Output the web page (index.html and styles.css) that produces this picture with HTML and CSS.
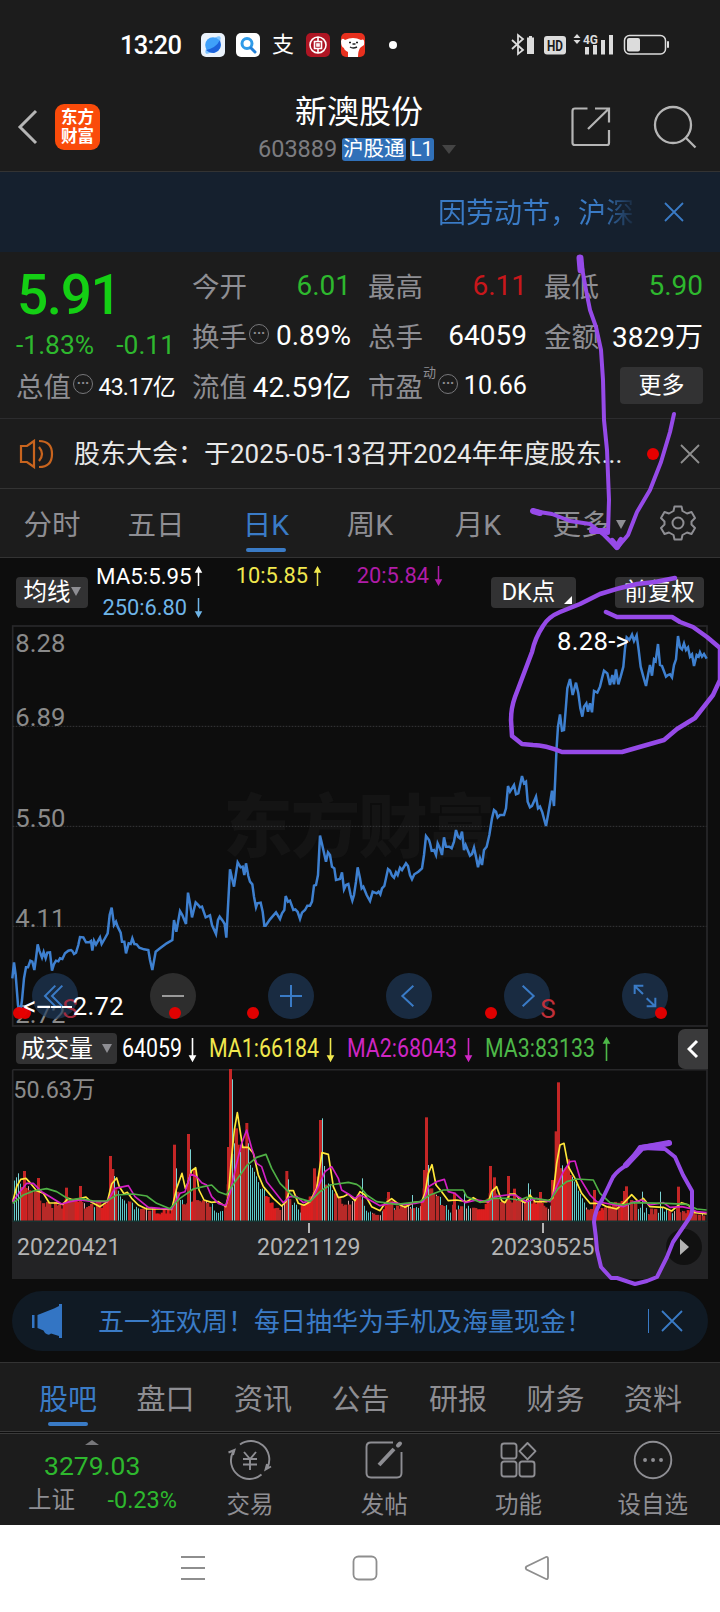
FILE: index.html
```html
<!DOCTYPE html>
<html lang="zh-CN">

<head>
    <meta charset="UTF-8">
    <meta name="viewport" content="width=device-width, initial-scale=1.0">
    <title>新澳股份 603889</title>
    <link rel="stylesheet" href="styles.css">
</head>

<body>
    <div class="status-bar">
        <span class="time">13:20</span>
        <div class="status-apps">
            <svg width="24" height="24" viewBox="0 0 24 24"><rect width="24" height="24" rx="5" fill="#eaf2fb" /><ellipse cx="12" cy="12" rx="11" ry="4" transform="rotate(-50 12 12)" fill="#7fc4ff" /><circle cx="12" cy="12" r="7.8" fill="#3fa0fa" /><path d="M5 17Q15 15 19 7Q22 17 13 20Q8 20 5 17z" fill="#1c62dc" /></svg>
            <svg width="24" height="24" viewBox="0 0 24 24"><rect width="24" height="24" rx="5" fill="#fff" /><circle cx="11" cy="10.5" r="5" fill="none" stroke="#2f9be8" stroke-width="3" /><path d="M15 15l4 4" stroke="#2280d8" stroke-width="3" stroke-linecap="round" /></svg>
            <span class="pay">支</span>
            <svg width="24" height="24" viewBox="0 0 24 24"><rect width="24" height="24" rx="5" fill="#ae1523" /><circle cx="12" cy="12" r="8" fill="none" stroke="#fff" stroke-width="1.6" /><path d="M12 4v4M12 16v4M8.500 8.500h7v7h-7zM11 11h2v2h-2z" fill="none" stroke="#fff" stroke-width="1.600" /></svg>
            <svg width="24" height="24" viewBox="0 0 24 24"><rect width="24" height="24" rx="5" fill="#e8301e" /><path d="M0 8Q1 4 4 7Q12 3 20 7Q24 5 23 12Q20 14 19 15Q17 18 17 24H7V19Q3 17 3 15Q0 14 0 8z" fill="#fff" /><path d="M8 9.500h2M15 9.500h2M11.500 11h3M9 14q3 2 7 0" stroke="#222" stroke-width="1.400" fill="none" /></svg>
            <i class="dot"></i>
        </div>
        <svg class="status-icons" width="160" height="24" viewBox="0 0 160 24" fill="#dcdcdc">
            <path d="M1 7l11 10-5 4V2l5 4L1 16" fill="none" stroke="#dcdcdc" stroke-width="1.800" />
            <path d="M18 3h3v1.500h2V21h-7V4.500h2z" />
            <rect x="33" y="3" width="22" height="18.500" rx="3" />
            <text x="36" y="17.500" class="hd" textLength="16" lengthAdjust="spacingAndGlyphs">HD</text>
            <path d="M62.500 5l3.500-4 3.500 4zM62.500 7l3.500 4 3.500-4z" />
            <text x="72" y="11" class="g4" textLength="15" lengthAdjust="spacingAndGlyphs">4G</text>
            <path d="M74 14h4v7.500h-4zM82 12h4v9.500h-4zM90 7h4v14.500h-4zM98 2h4v19.500h-4z" />
            <rect x="113.500" y="2.500" width="41" height="18.500" rx="5" fill="none" stroke="#dcdcdc" stroke-width="1.500" />
            <rect x="116" y="5" width="13" height="13.500" rx="2" />
            <rect x="156" y="8" width="2" height="7" rx="1" />
        </svg>
    </div>

    <div class="header">
        <svg class="back" width="24" height="40" viewBox="0 0 24 40"><path d="M20 4L4 20l16 16" fill="none" stroke="#b5b5b5" stroke-width="3" /></svg>
        <div class="logo">东方<br>财富</div>
        <div class="title">
            <h1>新澳股份</h1>
            <div class="code"><span>603889</span><b>沪股通</b><b>L1</b><i class="down"></i></div>
        </div>
        <svg class="share" width="40" height="40" viewBox="0 0 40 40" fill="none" stroke="#b5b5b5" stroke-width="2.200"><path d="M16.500 1.500H4Q1.500 1.500 1.500 4V36Q1.500 38 4 38H36Q38 38 38 36V23M24 1.500H38V15.500M37.500 2L17 22" /></svg>
        <svg class="search" width="44" height="44" viewBox="0 0 44 44" fill="none" stroke="#b5b5b5" stroke-width="2.300"><circle cx="20" cy="20" r="18" /><path d="M32.500 32.500l10 10" /></svg>
    </div>

    <div class="notice">
        <span class="notice-text">因劳动节，沪深</span>
        <svg width="20" height="20" viewBox="0 0 20 20"><path d="M1 1l18 18M19 1L1 19" stroke="#3a7bc6" stroke-width="1.800" /></svg>
    </div>

    <div class="quote">
        <div class="price-col">
            <div class="price">5.91</div>
            <div class="change"><span>-1.83%</span><span>-0.11</span></div>
            <div class="cell"><label>总值</label><i class="more-dot">···</i><span class="val small">43.17亿</span></div>
        </div>
        <div class="quote-grid">
            <div class="cell"><label>今开</label><span class="val green">6.01</span></div>
            <div class="cell"><label>最高</label><span class="val red">6.11</span></div>
            <div class="cell"><label>最低</label><span class="val green">5.90</span></div>
            <div class="cell"><label>换手</label><i class="more-dot">···</i><span class="val">0.89%</span></div>
            <div class="cell"><label>总手</label><span class="val">64059</span></div>
            <div class="cell"><label>金额</label><span class="val">3829万</span></div>
            <div class="cell"><label>流值</label><span class="val">42.59亿</span></div>
            <div class="cell"><label>市盈</label><sup>动</sup><i class="more-dot">···</i><span class="val mid">10.66</span></div>
            <div class="cell"><button class="more-btn">更多</button></div>
        </div>
    </div>

    <div class="news">
        <svg width="35" height="30" viewBox="0 0 35 30" fill="none" stroke="#c8641e" stroke-width="2.200"><path d="M15 2L8 7H2V23H8L15 28zM20 8Q26 15 20 22M20 2Q33 2 33 15T20 28" /></svg>
        <span class="news-text">股东大会：于2025-05-13召开2024年年度股东...</span>
        <i class="red-dot"></i>
        <svg class="close" width="20" height="20" viewBox="0 0 20 20"><path d="M1 1l18 18M19 1L1 19" stroke="#8e8e8e" stroke-width="1.800" /></svg>
    </div>

    <div class="tabs">
        <div><span>分时</span></div>
        <div><span>五日</span></div>
        <div><span class="active">日K</span></div>
        <div><span>周K</span></div>
        <div><span>月K</span></div>
        <div><span>更多<i class="down"></i></span></div>
        <svg width="36" height="36" viewBox="0 0 36 36" fill="none" stroke="#8e8e93" stroke-width="2"><path d="M14.500 1.500h7l1 4.500 4.500 2.500 4.500-1.500 3.500 6-3.500 3.500v3l3.500 3.500-3.500 6-4.500-1.500-4.500 2.500-1 4.500h-7l-1-4.500-4.500-2.500-4.500 1.500-3.500-6 3.500-3.500v-3l-3.500-3.500 3.500-6 4.500 1.500 4.500-2.500z" stroke-linejoin="round" /><circle cx="18" cy="18" r="5.500" /></svg>
    </div>

    <div class="ma-bar">
        <button>均线<i class="down"></i></button>
        <div class="ma-list">
            <span class="ma5">MA5:5.95</span><svg class="arr" viewBox="0 0 9 20"><path d="M4.500 20V3M2 6L4.500 1.500 7 6z" stroke="#fff" fill="#fff" /></svg>
            <span class="ma10">10:5.85</span><svg class="arr" viewBox="0 0 9 20"><path d="M4.500 20V3M2 6L4.500 1.500 7 6z" stroke="#f0e84e" fill="#f0e84e" /></svg>
            <span class="ma20">20:5.84</span><svg class="arr" viewBox="0 0 9 20"><path d="M4.500 0V17M2 14L4.500 18.500 7 14z" stroke="#b01ca8" fill="#b01ca8" /></svg>
            <span class="ma250">250:6.80</span><svg class="arr" viewBox="0 0 9 20"><path d="M4.500 0V17M2 14L4.500 18.500 7 14z" stroke="#6fb5e8" fill="#6fb5e8" /></svg>
        </div>
        <button class="dk">DK点<i class="corner"></i></button>
        <button class="fq">前复权</button>
    </div>

    <!-- K线图 -->
    <svg class="price-chart" width="720" height="408" viewBox="0 0 2160 1224">
        <text x="670" y="695" class="watermark" textLength="815">东方财富</text>
        <rect x="38" y="18" width="2083" height="1200" class="frame" />
        <path d="M38 319H2120M38 619H2120M38 919H2120" class="grid-line" />
        <g class="axis-text">
            <text x="46" y="96">8.28</text>
            <text x="46" y="318">6.89</text>
            <text x="46" y="620">5.50</text>
            <text x="46" y="920">4.11</text>
            <text x="46" y="1208">2.72</text>
        </g>
        <polyline class="price-line" points="37,1075 42,1027 47,1065 54,1155 58,1170 62,1170 66,1140 72,1075 78,1042 84,1042 91,1022 97,1025 103,1050 108,1015 113,973 118,992 126,1013 131,996 137,1015 142,998 150,997 156,1052 162,1032 168,1022 175,1024 180,1015 187,1017 195,1000 205,992 213,990 217,993 222,1002 228,998 235,975 240,951 250,952 258,967 268,967 273,963 277,992 282,962 288,974 300,952 305,972 312,960 323,940 329,885 335,863 342,915 348,905 353,920 362,938 366,965 373,965 378,1000 386,970 392,972 397,955 403,972 410,973 418,983 432,988 445,990 450,1020 457,1050 467,995 480,985 500,970 517,960 522,900 529,935 540,873 547,885 558,912 564,818 570,850 576,892 587,847 595,855 600,862 606,860 617,892 630,886 636,915 648,942 654,900 659,890 668,902 674,912 679,953 684,860 690,748 696,775 702,800 713,727 722,742 728,740 733,765 738,730 745,768 750,785 757,793 762,830 768,862 772,850 782,848 788,875 793,917 797,917 810,898 828,877 840,897 846,880 853,870 857,828 864,845 870,842 880,870 886,868 893,876 900,897 906,878 915,870 922,857 930,857 936,845 942,797 948,795 954,765 960,647 966,672 978,725 984,697 990,705 996,740 1003,745 1008,780 1020,777 1026,757 1032,808 1038,795 1045,792 1052,825 1057,842 1062,825 1068,785 1073,742 1080,775 1085,805 1090,800 1100,825 1110,843 1118,815 1130,820 1136,815 1141,823 1146,805 1153,798 1164,747 1170,752 1176,767 1182,773 1188,757 1193,765 1200,743 1206,750 1218,730 1224,738 1230,765 1236,778 1243,763 1255,755 1266,745 1272,705 1278,648 1287,660 1290,670 1295,692 1302,690 1308,705 1313,670 1320,685 1326,705 1332,652 1338,680 1348,680 1355,685 1362,665 1368,630 1374,650 1380,655 1386,635 1392,690 1397,675 1410,707 1416,702 1422,683 1428,710 1434,742 1440,715 1446,735 1452,690 1460,680 1468,645 1476,595 1482,570 1488,575 1493,592 1500,585 1512,585 1518,565 1524,498 1530,515 1542,495 1548,523 1555,520 1566,468 1572,490 1578,485 1583,545 1590,562 1596,558 1608,530 1614,565 1620,560 1627,577 1633,600 1638,618 1644,585 1650,550 1656,512 1662,558 1666,470 1670,380 1674,320 1680,283 1686,332 1692,330 1697,270 1702,205 1710,177 1718,225 1728,188 1735,220 1741,265 1747,290 1752,260 1759,250 1764,275 1770,250 1776,277 1782,213 1792,218 1800,200 1806,175 1812,152 1822,160 1830,195 1837,165 1842,193 1848,148 1855,193 1862,170 1870,140 1875,85 1880,52 1888,60 1896,44 1902,63 1910,46 1916,90 1922,140 1930,170 1938,198 1944,165 1950,135 1956,167 1962,118 1967,123 1974,72 1980,135 1986,138 1998,170 2004,165 2010,163 2016,172 2022,135 2028,118 2034,48 2040,82 2046,88 2052,70 2058,90 2064,82 2070,110 2076,103 2082,138 2090,105 2096,110 2100,97 2106,110 2112,102 2120,116" />
        <g class="ctrl">
            <circle cx="165" cy="1128" r="69" /><path d="M166 1097L135 1128L166 1159M187 1097L156 1128L187 1159" />
            <circle cx="519" cy="1128" r="69" class="off" /><path d="M486 1128H552" class="off-line" />
            <circle cx="873" cy="1128" r="69" /><path d="M840 1128H906M873 1095V1161" />
            <circle cx="1227" cy="1128" r="69" /><path d="M1240 1097L1207 1128L1240 1159" />
            <circle cx="1581" cy="1128" r="69" /><path d="M1568 1097L1601 1128L1568 1159" />
            <circle cx="1935" cy="1128" r="69" /><path d="M1929 1122L1904 1098M1904 1122V1097H1930M1940 1135L1965 1159M1940 1159H1966V1133" />
        </g>
        <g class="event-dots"><circle cx="57" cy="1179" r="18" /><circle cx="75" cy="1179" r="18" /><circle cx="525" cy="1179" r="18" /><circle cx="759" cy="1179" r="18" /><circle cx="1473" cy="1179" r="18" /><circle cx="1983" cy="1179" r="18" /></g>
        <text x="187" y="1194" class="s-mark dim">S</text>
        <text x="1621" y="1194" class="s-mark">S</text>
        <g class="mark-text">
            <text x="70" y="1185">&lt;</text>
            <path d="M112 1161H150M152 1161H184M186 1161H216" />
            <text x="218" y="1185" textLength="153">2.72</text>
            <text x="1671" y="89" textLength="216">8.28-&gt;</text>
        </g>
    </svg>

    <div class="vol-bar">
        <button>成交量<i class="down"></i></button>
        <svg class="vol-legend" width="536" height="42" viewBox="0 0 536 42">
            <text x="0" y="29" fill="#fff" textLength="60" lengthAdjust="spacingAndGlyphs">64059</text>
            <text x="87" y="29" fill="#f0e84e" textLength="110" lengthAdjust="spacingAndGlyphs">MA1:66184</text>
            <text x="225" y="29" fill="#cf26c4" textLength="110" lengthAdjust="spacingAndGlyphs">MA2:68043</text>
            <text x="363" y="29" fill="#4db848" textLength="110" lengthAdjust="spacingAndGlyphs">MA3:83133</text>
            <g stroke-width="1.600">
                <path d="M70.500 10V31M68 28L70.500 32.500l2.500-4.500z" stroke="#fff" fill="#fff" />
                <path d="M208.500 10V31M206 28L208.500 32.500l2.500-4.500z" stroke="#f0e84e" fill="#f0e84e" />
                <path d="M346.500 10V31M344 28L346.500 32.500l2.500-4.500z" stroke="#cf26c4" fill="#cf26c4" />
                <path d="M484.500 33V12M482 15L484.500 10.500l2.500 4.500z" stroke="#4db848" fill="#4db848" />
            </g>
        </svg>
        <div class="fold"><svg width="12" height="20" viewBox="0 0 12 20"><path d="M10 2L2 10l8 8" fill="none" stroke="#fff" stroke-width="3" /></svg></div>
    </div>

    <!-- 成交量 -->
    <svg class="vol-chart" width="720" height="153" viewBox="0 147 2160 459">
        <path d="M38 149H2121V606M38 149V606" class="frame" />
        <text x="40" y="234" class="axis-text">50.63万</text>
        <g id="bars"></g>
        <path d="M38 604H2121" stroke="#173230" stroke-width="5" />
        <polyline class="vol-ma" stroke="#ffe83a" points="38,545 50,500 62,478 78,475 90,488 110,512 130,520 148,549 170,549 188,553 205,535 220,540 240,536 258,531 272,545 300,560 322,545 335,492 350,474 358,500 372,521 382,517 395,535 415,555 440,567 480,567 515,568 530,505 546,460 556,505 563,490 575,452 587,443 597,510 612,540 635,547 655,545 677,560 685,530 693,430 703,330 712,278 720,330 728,382 745,382 760,400 775,465 790,500 820,535 845,558 858,545 868,512 880,512 895,550 912,556 930,545 950,505 966,398 985,403 1000,500 1015,533 1030,530 1045,522 1065,542 1080,515 1095,525 1115,560 1140,572 1155,550 1175,536 1195,552 1215,562 1240,548 1265,545 1275,520 1285,460 1296,434 1308,495 1325,515 1345,542 1370,540 1400,545 1420,533 1440,545 1465,545 1475,515 1490,500 1505,542 1515,548 1530,522 1545,522 1560,540 1575,548 1590,525 1605,545 1640,545 1658,535 1670,430 1680,375 1692,370 1705,440 1725,475 1745,520 1770,550 1800,550 1820,560 1850,567 1870,550 1895,524 1915,545 1930,535 1950,560 1990,562 2015,573 2030,560 2045,548 2065,555 2085,578 2120,582" />
        <polyline class="vol-ma" stroke="#d41fc4" points="38,545 60,515 80,490 100,490 125,515 150,530 185,552 210,545 240,540 280,545 322,545 345,505 385,497 405,530 445,562 480,565 515,567 540,520 555,515 572,462 590,470 605,488 620,495 635,530 655,550 677,557 690,520 710,430 725,370 740,330 755,385 770,430 785,440 800,485 820,510 850,548 870,530 890,530 910,548 935,540 955,500 975,455 995,440 1015,475 1025,510 1045,522 1065,535 1080,525 1100,535 1140,557 1180,548 1210,553 1245,550 1270,545 1285,500 1310,485 1333,478 1345,515 1365,520 1395,548 1430,540 1465,545 1485,530 1520,525 1545,525 1580,545 1610,535 1650,545 1670,500 1690,455 1710,425 1725,423 1740,475 1770,525 1790,545 1830,552 1870,560 1895,548 1925,540 1950,555 1990,548 2010,562 2045,560 2070,565 2090,575 2120,578" />
        <polyline class="vol-ma" stroke="#4fb045" points="38,550 70,525 100,513 140,506 170,515 210,540 240,535 280,543 320,543 350,525 400,522 440,528 470,550 510,566 540,535 580,507 610,500 635,495 655,515 680,524 695,500 740,437 770,412 798,403 815,445 840,490 880,530 930,545 960,515 990,495 1045,487 1070,493 1080,500 1100,525 1130,545 1190,553 1260,545 1290,525 1330,510 1390,510 1400,530 1440,547 1480,535 1520,535 1560,540 1580,532 1650,542 1675,505 1700,485 1730,477 1780,480 1800,520 1830,548 1870,555 1900,548 2000,550 2060,553 2090,567 2120,570" />
    </svg>

    <div class="date-axis">
        <span class="first">20220421</span>
        <span class="tick">20221129</span>
        <span class="tick">20230525</span>
        <div class="play"><i></i></div>
    </div>

    <div class="promo">
        <svg width="32" height="36" viewBox="0 0 32 36" fill="#3375c4"><path d="M0 12h2.500v13H0zM5.500 12L22 5.500 27 3V1h3v34h-3v-2l-8-2.500Q17 33 13 30L11.500 27.500l-6-2.500z" /></svg>
        <span>五一狂欢周！每日抽华为手机及海量现金！</span>
        <i class="line"></i>
        <svg class="close" width="22" height="22" viewBox="0 0 22 22"><path d="M1 1l20 20M21 1L1 21" stroke="#3a7bc6" stroke-width="1.800" /></svg>
    </div>

    <div class="info-tabs">
        <span class="active">股吧</span>
        <span>盘口</span>
        <span>资讯</span>
        <span>公告</span>
        <span>研报</span>
        <span>财务</span>
        <span>资料</span>
    </div>

    <div class="toolbar">
        <div class="index">
            <i class="up"></i>
            <div class="index-val">3279.03</div>
            <div class="index-row"><span>上证</span><b>-0.23%</b></div>
        </div>
        <div class="tool">
            <svg width="44" height="40" viewBox="-22 -20 44 40"><path d="M-10-15.500A18.500 18.500 0 0 1 17.500 7.500M21 6.500L15.500 9.500 17 4M11.500 14.500A18.500 18.500 0 0 1-17-8M-21.500-7.500L-15.500-10 -17-5" /><path d="M-6-8L0-1 6-8M0-1V10M-7-1H7M-7 4.500H7" /></svg>
            <span>交易</span>
        </div>
        <div class="tool">
            <svg width="44" height="40" viewBox="-22 -20 44 40"><path d="M9-17.500H-13Q-17.500-17.500-17.500-13V13Q-17.500 17.500-13 17.500H13Q17.500 17.500 17.500 13V-8" /><path d="M-5 5L10-11" stroke-width="4" /><path d="M14-14.500l2-2" stroke-width="4" stroke-linecap="round" /></svg>
            <span>发帖</span>
        </div>
        <div class="tool">
            <svg width="44" height="40" viewBox="-22 -20 44 40"><rect x="-16.500" y="-16.500" width="15" height="15" rx="2.500" /><rect x="-16.500" y="1.500" width="15" height="15" rx="2.500" /><rect x="1.500" y="1.500" width="15" height="15" rx="2.500" /><path d="M9.500-17l8 8.200-8 8.200-8-8.200z" stroke-linejoin="round" /></svg>
            <span>功能</span>
        </div>
        <div class="tool">
            <svg width="44" height="40" viewBox="-22 -20 44 40"><circle r="18.300" /><path d="M-8 0h.1M0 0h.1M8 0h.1" stroke-width="3.800" stroke-linecap="round" /></svg>
            <span>设自选</span>
        </div>
    </div>

    <div class="nav-bar">
        <svg width="26" height="26" viewBox="0 0 26 26"><path d="M1 2h24M1 13h24M1 24h24" /></svg>
        <svg width="26" height="26" viewBox="0 0 26 26"><rect x="1.500" y="1.500" width="23" height="23" rx="5" /></svg>
        <svg width="26" height="26" viewBox="0 0 26 26"><path d="M22 2Q24 1.500 24 4V22Q24 24.500 22 24L2.500 14.500Q1 13 2.500 11.500z" /></svg>
    </div>

    <!-- 手写标注 -->
    <svg class="marks" width="720" height="1612" viewBox="0 0 720 1612">
        <path d="M580 258L581 270" stroke-width="7" />
        <path d="M581 262L586 290L590 310L596 327L601 350L603 380L604 420L607 450L609 500L608 533L592 531" />
        <path d="M674 414L670 432L661 462L650 490L637 512L628 535L617 548L604 535L590 524L570 521L552 514L533 511" />
        <path d="M533 511L540 513M612 541L617 547L621 540M592 531H607" stroke-width="6" />
        <path d="M675 578L655 582L637 584Q618 588 600 594L580 604L560 612Q548 617 543 626Q535 638 532 652L515 697Q511 708 511 720L512 736L522 744L533 745Q545 745 562 752H622L664 740L677 729L695 718L713 695L720 680V648L707 637L693 627L680 622L672 617H617L606 612" stroke-width="4.500" />
        <path d="M670 1143L640 1147L627 1165Q618 1170 613 1177L602 1200Q595 1210 594 1222Q596 1236 597 1250L601 1267L611 1278H617L635 1284L647 1281L657 1277L667 1257L673 1242L688 1220Q693 1213 692 1207V1191L683 1175L675 1157L665 1149L643 1148" />
        <path d="M669 1143L642 1148L626 1165" stroke-width="6" />
    </svg>

    <script src="chart.js"></script>
</body>

</html>
```
FILE: styles.css
```css
* {
    box-sizing: border-box;
}

body {
    margin: 0;
    width: 720px;
    height: 1612px;
    position: relative;
    overflow: hidden;
    background-color: #0d0d0d;
    color: #fff;
    font-family: Roboto, "Noto Sans CJK SC", sans-serif;
}

i {
    font-style: normal;
}

svg {
    display: block;
    flex-shrink: 0;
}

button {
    font-family: inherit;
    color: #fff;
    background-color: #323233;
    border: none;
    border-radius: 4px;
    padding: 0;
}

/* 状态栏 */
.status-bar {
    height: 80px;
    padding: 10px 49px 0 120px;
    background-color: #1c1c1c;
    display: flex;
    align-items: center;
}

.time {
    width: 81px;
    font-size: 25.5px;
    font-weight: 500;
    letter-spacing: -0.7px;
}

.status-apps {
    display: flex;
    align-items: center;
    gap: 11px;
}

.pay {
    width: 24px;
    font-size: 22px;
    line-height: 24px;
    text-align: center;
}

.dot {
    width: 8px;
    height: 8px;
    border-radius: 50%;
    background-color: #fff;
    margin-left: 13px;
}

.status-icons {
    margin-left: auto;
}

.hd {
    font-size: 15px;
    font-weight: 700;
    fill: #1c1c1c;
}

.g4 {
    font-size: 13px;
    font-weight: 700;
}

/* 顶部标题 */
.header {
    height: 92px;
    padding: 2px 23px 0 16px;
    display: flex;
    align-items: center;
    background-color: #1c1c1c;
    border-bottom: 1px solid #333;
}

.logo {
    width: 45px;
    height: 46px;
    margin-left: 15px;
    border-radius: 9px;
    background-color: #fa4b0a;
    font-size: 16.5px;
    font-weight: 700;
    line-height: 19px;
    padding-top: 4px;
    text-align: center;
}

.title {
    width: 210px;
    margin-left: 158px;
}

.title h1 {
    margin: 0 0 5px;
    font-size: 32px;
    line-height: 36px;
    font-weight: 400;
    padding-left: 37px;
}

.code {
    display: flex;
    align-items: center;
    height: 24px;
    font-size: 23.5px;
    color: #7c7c80;
    position: relative;
    top: 2px;
}

.code span {
    width: 84px;
}

.code b {
    font-weight: 400;
    font-size: 20.5px;
    line-height: 23px;
    padding: 0 1px;
    margin-right: 4px;
    border-radius: 3px;
    background-color: #3070b8;
    color: #fff;
}

.down {
    display: inline-block;
    border: 5px solid transparent;
    border-top: 9px solid #8e8e93;
    border-bottom: none;
}

.code .down {
    margin-left: 4px;
    border-width: 9px 7px 0;
    border-top-color: #444;
}

.share {
    margin-left: auto;
}

.search {
    margin-left: 42px;
}

.notice {
    height: 80px;
    padding-right: 36px;
    display: flex;
    align-items: center;
    justify-content: flex-end;
    gap: 30px;
    background-color: #15202e;
}

.notice-text {
    font-size: 28px;
    margin-top: -2px;
    background: linear-gradient(90deg, #3a7bc6 82%, #1a2a3e);
    background-clip: text;
    -webkit-background-clip: text;
    color: transparent;
}

/* 行情 */
.quote {
    height: 167px;
    padding: 8px 16px 0;
    display: flex;
    gap: 18px;
    background-color: #1c1c1c;
    border-bottom: 1px solid #2c2c2e;
}

.price-col {
    width: 159px;
}

.price {
    height: 68px;
    line-height: 70px;
    font-size: 55px;
    font-weight: 500;
    letter-spacing: -1.4px;
    padding-left: 1px;
    color: #14cf14;
}

.change {
    height: 32px;
    line-height: 34px;
    font-size: 26.4px;
    display: flex;
    justify-content: space-between;
    color: #2eb82e;
}

.quote-grid {
    flex: 1;
    display: grid;
    grid-template-columns: repeat(3, 158px);
    grid-auto-rows: 50px;
    column-gap: 18px;
}

.cell {
    height: 50px;
    display: flex;
    align-items: center;
    font-size: 28px;
    white-space: nowrap;
}

.cell label {
    color: #8e8e93;
    font-size: 27.5px;
}

.quote-grid .cell label {
    margin-left: -1px;
}

.cell sup {
    color: #8e8e93;
    font-size: 13px;
    align-self: flex-start;
    line-height: 26px;
}

.val {
    margin-left: auto;
}

.val.small {
    font-size: 23px;
    letter-spacing: -0.7px;
}

.val.mid {
    font-size: 25.2px;
}

.green {
    color: #2eb82e;
}

.red {
    color: #c8171b;
}

.more-dot {
    width: 20px;
    height: 20px;
    border: 1.5px solid #77777a;
    border-radius: 50%;
    color: #8e8e93;
    font-size: 14px;
    font-weight: 700;
    line-height: 17px;
    text-align: center;
    margin-top: -3px;
    margin-left: 2px;
}

.more-btn {
    width: 83px;
    height: 37px;
    margin-left: auto;
    font-size: 23px;
    line-height: 35px;
}

/* 公告 */
.news {
    height: 70px;
    padding: 0 20px 0 19px;
    display: flex;
    align-items: center;
    background-color: #1c1c1c;
    border-bottom: 1px solid #333;
}

.news-text {
    width: 553px;
    margin: -4px 0 0 20px;
    font-size: 26px;
    white-space: nowrap;
    color: #e8e8e8;
}

.red-dot {
    width: 12px;
    height: 12px;
    border-radius: 50%;
    background-color: #e60000;
    margin-left: 20px;
}

.news .close {
    margin-left: auto;
}

/* 周期切换 */
.tabs {
    height: 69px;
    padding-bottom: 1px;
    display: grid;
    grid-template-columns: 104px 104px 116px 92px 124px 98px 82px;
    align-items: center;
    justify-items: center;
    background-color: #1c1c1c;
    border-bottom: 1px solid #333;
    font-size: 28.5px;
    color: #8e8e93;
}

.tabs .down {
    margin-left: 6px;
    vertical-align: 6px;
}

.tabs svg {
    margin-right: 2px;
}

.active {
    position: relative;
    color: #3a7bc6;
}

.active::after {
    content: "";
    position: absolute;
    left: 50%;
    bottom: -10px;
    width: 40px;
    height: 4px;
    margin-left: -20px;
    border-radius: 2px;
    background-color: #3a7bc6;
}

.ma-bar {
    height: 62px;
    padding: 6px 16px 0;
    display: flex;
    align-items: center;
}

.ma-bar button {
    width: 72px;
    height: 31px;
    font-size: 23.5px;
    line-height: 31px;
    white-space: nowrap;
}

.ma-bar .down {
    vertical-align: 4px;
}

.ma-list {
    width: 395px;
    margin: -1px 0 0 8px;
    display: grid;
    grid-template-columns: 91px 12px 101px 10px 103px 10px;
    grid-template-rows: 32px 32px;
    column-gap: 4px;
    align-items: center;
    text-align: right;
    font-size: 21.8px;
}

.arr {
    width: 9px;
    height: 20px;
    justify-self: end;
    stroke-width: 1.5;
}

.ma5 {
    font-size: 22.3px;
}

.ma10 {
    color: #f0e84e;
}

.ma20 {
    color: #b01ca8;
}

.ma250 {
    color: #6fb5e8;
}

.ma-bar .dk {
    width: 85px;
    padding-right: 10px;
    position: relative;
}

.corner {
    position: absolute;
    right: 4px;
    bottom: 4px;
    border-left: 8px solid transparent;
    border-bottom: 8px solid #fff;
}

.ma-bar .fq {
    width: 89px;
    margin-left: auto;
}

/* 图表 */
.frame {
    fill: none;
    stroke: #28282a;
    stroke-width: 5;
}

.grid-line {
    stroke: #38383a;
    stroke-width: 3;
    stroke-dasharray: 5 4;
}

.axis-text {
    font-size: 77px;
    fill: #8a8a8a;
}

.vol-chart .axis-text {
    font-size: 70px;
}

.watermark {
    font-size: 208px;
    font-weight: 900;
    fill: #141414;
}

.price-line {
    fill: none;
    stroke: #3e80d0;
    stroke-width: 7.5;
}

.event-dots {
    fill: #e60000;
    fill-opacity: 0.97;
}

.s-mark {
    font-size: 78px;
    fill: #c0303a;
}

.s-mark.dim {
    fill: #a02c40;
}

.ctrl circle {
    fill: #213c5d;
    fill-opacity: 0.65;
}

.ctrl .off {
    fill: #3f3f3f;
}

.ctrl path {
    fill: none;
    stroke: #3a7bc6;
    stroke-width: 6;
}

.ctrl .off-line {
    stroke: #9a9a9a;
}

.mark-text {
    font-size: 77px;
    fill: #fff;
    stroke-width: 6;
}

.mark-text path {
    stroke: #fff;
}

.vol-bar {
    height: 41px;
    padding: 0 12px 0 16px;
    display: flex;
    align-items: center;
}

.vol-bar button {
    width: 101px;
    height: 31px;
    font-size: 24px;
    line-height: 32px;
    white-space: nowrap;
}

.vol-bar .down {
    margin-left: 9px;
    vertical-align: 4px;
}

.vol-legend {
    margin-left: 5px;
    font-size: 26px;
}

.fold {
    width: 30px;
    height: 40px;
    margin-left: auto;
    border-radius: 7px 0 0 7px;
    background-color: #3a3a3b;
    display: flex;
    align-items: center;
    justify-content: center;
}

.vol-ma {
    fill: none;
    stroke-width: 5;
    stroke-linejoin: round;
}

.date-axis {
    height: 57px;
    margin: 0 12px;
    padding: 0 6px 7px 5px;
    display: flex;
    align-items: center;
    background-color: #232325;
    font-size: 23px;
    color: #b4b4b4;
}

.date-axis span {
    width: 104px;
}

.date-axis .tick {
    margin-left: 136px;
    position: relative;
}

.date-axis .tick + .tick {
    margin-left: 130px;
}

.tick::before {
    content: "";
    position: absolute;
    left: 51px;
    top: -11px;
    width: 2px;
    height: 10px;
    background-color: #b4b4b4;
}

.play {
    width: 36px;
    height: 36px;
    margin-left: auto;
    border-radius: 50%;
    background-color: #111;
    display: flex;
    align-items: center;
    justify-content: center;
}

.play i {
    border: 8px solid transparent;
    border-left: 9px solid #b4b4b4;
    border-right: none;
}

/* 活动横幅 */
.promo {
    height: 60px;
    margin: 12px 12px 11px;
    padding: 0 25px 0 20px;
    border-radius: 30px;
    background-color: #101a24;
    display: flex;
    align-items: center;
    font-size: 26px;
    color: #3a7bc6;
}

.promo span {
    margin: -3px 0 0 34px;
    white-space: nowrap;
}

.promo .line {
    width: 1.5px;
    height: 24px;
    margin-left: auto;
    margin-right: 12px;
    background-color: #3a7bc6;
}

.info-tabs {
    height: 70px;
    padding: 0 38px 0 39px;
    border-top: 1px solid #333;
    border-bottom: 1px solid #3a3a3a;
    display: flex;
    align-items: center;
    justify-content: space-between;
    background-color: #1c1c1c;
    font-size: 29px;
    color: #8e8e93;
}

.info-tabs .active::after {
    bottom: -8px;
}

.toolbar {
    height: 92px;
    margin-top: 1px;
    border-top: 1px solid #3a3a3a;
    display: flex;
    background-color: #1c1c1c;
    color: #8e8e93;
}

.index {
    width: 183px;
    padding: 6px 6px 0 28px;
}

.up {
    display: block;
    width: 14px;
    margin-left: 57px;
    border: 7px solid transparent;
    border-bottom: 5px solid #77777a;
    border-top: none;
}

.index-val {
    font-size: 26.5px;
    line-height: 40px;
    padding: 1px 0 0 16px;
    color: #2eb82e;
}

.index-row {
    display: flex;
    justify-content: space-between;
    font-size: 23.5px;
    line-height: 29px;
}

.index-row b {
    font-weight: 400;
    color: #2eb82e;
}

.tool {
    width: 134.2px;
    padding-top: 6px;
    display: flex;
    flex-direction: column;
    align-items: center;
    font-size: 23.5px;
    line-height: 32px;
}

.tool svg {
    fill: none;
    stroke: #8e8e93;
    stroke-width: 1.9;
    margin-bottom: 9px;
}

.nav-bar {
    height: 88px;
    padding: 0 170px 2px 180px;
    display: flex;
    align-items: center;
    justify-content: space-between;
    background-color: #fff;
}

.nav-bar svg {
    fill: none;
    stroke: #8e8e8e;
    stroke-width: 1.8;
}

.marks {
    position: absolute;
    left: 0;
    top: 0;
    fill: none;
    stroke: #964ae8;
    stroke-width: 4;
    stroke-linecap: round;
    stroke-linejoin: round;
}
```
FILE: chart.js
```javascript
// 成交量柱: 每根间隔 6, 基线 603
const BASE = 603;

// 普通成交量的轮廓 [x, 顶部y]
const envelope = [
    [38, 485], [80, 490], [110, 515], [130, 545], [190, 550], [200, 525], [215, 535], [240, 528], [260, 550],
    [320, 545], [350, 510], [390, 545], [410, 565], [520, 565], [535, 515], [560, 545], [600, 530], [650, 562],
    [680, 560], [690, 430], [710, 350], [730, 375], [760, 450], [800, 525], [840, 565], [860, 520], [900, 562],
    [940, 510], [960, 450], [1000, 510], [1030, 545], [1080, 525], [1100, 560], [1140, 572], [1165, 535],
    [1200, 560], [1260, 550], [1280, 485], [1310, 525], [1350, 560], [1400, 550], [1460, 555], [1475, 495],
    [1500, 540], [1540, 530], [1600, 545], [1650, 555], [1668, 470], [1700, 430], [1730, 490], [1765, 560],
    [1820, 565], [1880, 530], [1930, 568], [2000, 562], [2040, 565], [2118, 582]
];

// 单独的高柱
const redSpikes = [
    [73, 453], [115, 474], [199, 503], [241, 498], [331, 408], [338, 447], [523, 374], [565, 342], [583, 450],
    [685, 381], [691, 147], [709, 325], [740, 309], [860, 453], [943, 445], [961, 300], [1165, 516],
    [1273, 450], [1279, 292], [1363, 518], [1471, 438], [1483, 472], [1525, 468], [1543, 506], [1621, 516],
    [1657, 480], [1668, 334], [1675, 187], [1705, 418], [1783, 510], [1873, 513], [1879, 499], [2035, 500]
];
const cyanSpikes = [
    [49, 472], [55, 460], [343, 468], [529, 445], [571, 388], [697, 178], [703, 370], [721, 396], [745, 370],
    [865, 478], [967, 295], [973, 438], [1087, 475], [1237, 525], [1285, 435], [1393, 520], [1585, 490],
    [1591, 508], [1687, 436], [1717, 470], [1927, 515], [1981, 515]
];

// 连续上涨 / 下跌的区间
const redRuns = [
    [66, 84], [192, 210], [228, 246], [305, 340], [460, 524], [577, 592], [680, 694], [704, 718], [795, 832],
    [905, 960], [1064, 1080], [1150, 1170], [1262, 1282], [1435, 1475], [1594, 1632], [1655, 1686],
    [1692, 1712], [1784, 1814], [1862, 1882], [2064, 2074]
];
const cyanRuns = [
    [44, 64], [350, 384], [635, 676], [744, 796], [876, 902], [985, 1004], [1092, 1112], [1338, 1362],
    [1722, 1750], [1914, 1950], [1975, 2000]
];

let seed = 7;
function rand() {
    seed = (seed * 16807) % 2147483647;
    return seed / 2147483647;
}

function topAt(x) {
    for (let i = 1; i < envelope.length; i++) {
        const [x1, y1] = envelope[i];
        const [x0, y0] = envelope[i - 1];
        if (x <= x1) return y0 + (y1 - y0) * (x - x0) / (x1 - x0);
    }
    return 580;
}

function inRuns(runs, x) {
    return runs.some(([a, b]) => x >= a && x <= b);
}

const bars = document.getElementById("bars");

function addBar(x, y, w, color) {
    const r = document.createElementNS("http://www.w3.org/2000/svg", "rect");
    r.setAttribute("x", x);
    r.setAttribute("y", y);
    r.setAttribute("width", w);
    r.setAttribute("height", BASE - y);
    r.setAttribute("fill", color);
    bars.appendChild(r);
}

for (let x = 43; x < 2118; x += 6) {
    const y = topAt(x) + rand() * 22 - 4;
    const roll = rand();
    if (inRuns(redRuns, x)) {
        addBar(x - 5, y, 9, "#dc1f1f");
    } else if (inRuns(cyanRuns, x)) {
        addBar(x - 1, y, 3, "#5ccaca");
    } else if (roll < 0.6) {
        addBar(x - 7, y, 10, "#b82a28");
    } else {
        addBar(x - 1, y, 3, roll < 0.82 ? "#cfa8a6" : "#5ccaca");
    }
}

redSpikes.forEach(([x, y]) => addBar(x - 4, y, 9, "#c42626"));
cyanSpikes.forEach(([x, y]) => addBar(x - 1, y, 3, "#7ad2d2"));
```
